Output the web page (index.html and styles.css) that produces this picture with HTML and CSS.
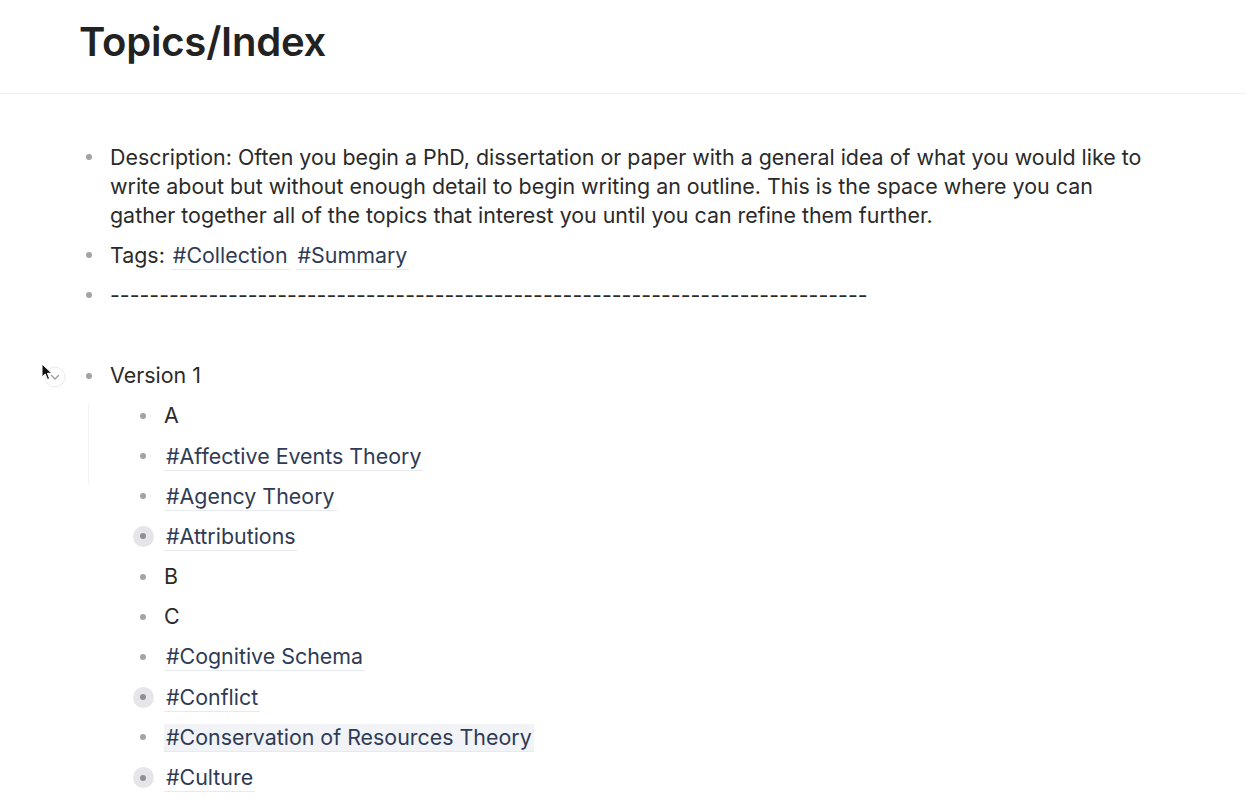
FILE: index.html
```html
<!DOCTYPE html>
<html>
<head>
<meta charset="utf-8">
<link rel="stylesheet" href="styles.css">
</head>
<body>
<div class="page">
  <header class="head">
    <h1 class="title">Topics/Index</h1>
  </header>
  <main class="blocks">
    <div class="block">
      <div class="row">
        <span class="bullet"><span class="dot"></span></span>
        <div class="content">Description: Often you begin a PhD, dissertation or paper with a general idea of what you would like to write about but without enough detail to begin writing an outline. This is the space where you can gather together all of the topics that interest you until you can refine them further.</div>
      </div>
    </div>
    <div class="block">
      <div class="row">
        <span class="bullet"><span class="dot"></span></span>
        <div class="content">Tags: <a class="tag">#Collection</a> <a class="tag">#Summary</a></div>
      </div>
    </div>
    <div class="block">
      <div class="row">
        <span class="bullet"><span class="dot"></span></span>
        <div class="content">-----------------------------------------------------------------------------</div>
      </div>
    </div>
    <div class="spacer"></div>
    <div class="block">
      <div class="row">
        <span class="toggle">
          <svg class="chev" width="22" height="22" viewBox="0 0 22 22"><circle cx="11" cy="11" r="10" fill="#fff" stroke="#ececec" stroke-width="1"/><path d="M7.5 9.5 L11 13 L14.5 9.5" fill="none" stroke="#9a9a9a" stroke-width="1.3" stroke-linecap="round" stroke-linejoin="round"/></svg>
          <svg class="cursor" width="12" height="18" viewBox="0 0 12 18"><path d="M1 1 L1 14 L4.2 11 L6.5 16.5 L8.6 15.6 L6.4 10.3 L10.8 10.3 Z" fill="#111" stroke="#fff" stroke-width="1"/></svg>
        </span>
        <span class="bullet"><span class="dot"></span></span>
        <div class="content">Version 1</div>
      </div>
      <div class="children">
        <div class="row"><span class="bullet"><span class="dot"></span></span><div class="content">A</div></div>
        <div class="row"><span class="bullet"><span class="dot"></span></span><div class="content"><a class="tag">#Affective Events Theory</a></div></div>
        <div class="row"><span class="bullet"><span class="dot"></span></span><div class="content"><a class="tag">#Agency Theory</a></div></div>
        <div class="row"><span class="bullet ring"><span class="dot"></span></span><div class="content"><a class="tag">#Attributions</a></div></div>
        <div class="row"><span class="bullet"><span class="dot"></span></span><div class="content">B</div></div>
        <div class="row"><span class="bullet"><span class="dot"></span></span><div class="content">C</div></div>
        <div class="row"><span class="bullet"><span class="dot"></span></span><div class="content"><a class="tag">#Cognitive Schema</a></div></div>
        <div class="row"><span class="bullet ring"><span class="dot"></span></span><div class="content"><a class="tag">#Conflict</a></div></div>
        <div class="row"><span class="bullet"><span class="dot"></span></span><div class="content"><a class="tag hl">#Conservation of Resources Theory</a></div></div>
        <div class="row"><span class="bullet ring"><span class="dot"></span></span><div class="content"><a class="tag">#Culture</a></div></div>
      </div>
    </div>
  </main>
</div>
</body>
</html>
```

FILE: styles.css
```css
* { box-sizing: border-box; }
html, body { margin: 0; padding: 0; background: #fff; }
body {
  font-family: Inter, "Noto Sans", sans-serif;
  color: #262626;
  width: 1246px;
  height: 804px;
  overflow: hidden;
}
.head {
  height: 94px;
  border-bottom: 1px solid #f1f1f1;
  padding-left: 79px;
  padding-top: 18px;
}
.title {
  margin: 0;
  font-size: 40px;
  font-weight: 600;
  line-height: 48px;
  color: #222;
  letter-spacing: -0.2px;
}
.blocks {
  padding-top: 43px;
  padding-left: 78px;
  padding-right: 90px;
}
.row {
  display: flex;
  align-items: flex-start;
  padding: 5.6px 0;
  position: relative;
}
.bullet {
  flex: 0 0 22px;
  height: 29px;
  display: flex;
  align-items: center;
  justify-content: center;
  margin-right: 10px;
}
.bullet .dot {
  width: 6px;
  height: 6px;
  border-radius: 50%;
  background: #a3a3a3;
}
.bullet.ring {
  position: relative;
}
.bullet.ring::before {
  content: "";
  position: absolute;
  width: 21px;
  height: 21px;
  border-radius: 50%;
  background: #e6e6ea;
}
.bullet.ring .dot { position: relative; background: #8f8f95; }
.content {
  font-size: 21.4px;
  line-height: 29px;
  color: #2a2a2a;
  flex: 1;
}
.tag {
  color: #2f3b55;
  text-decoration: none;
  border-bottom: 1px solid #e6e9ee;
  padding: 0 2px 1px;
}
.tag.hl { background: #f1f3f7; }
.spacer { height: 40px; }
.children {
  padding-left: 54px;
  position: relative;
}
.children::before {
  content: "";
  position: absolute;
  left: 10px;
  top: 8px;
  height: 80px;
  width: 1px;
  background: #f2f2f2;
}
.toggle {
  position: absolute;
  left: -34px;
  top: 10px;
  width: 22px;
  height: 22px;
}
.toggle .chev { position: absolute; left: 0; top: 0; }
.toggle .cursor { position: absolute; left: -3px; top: -3px; }
```
